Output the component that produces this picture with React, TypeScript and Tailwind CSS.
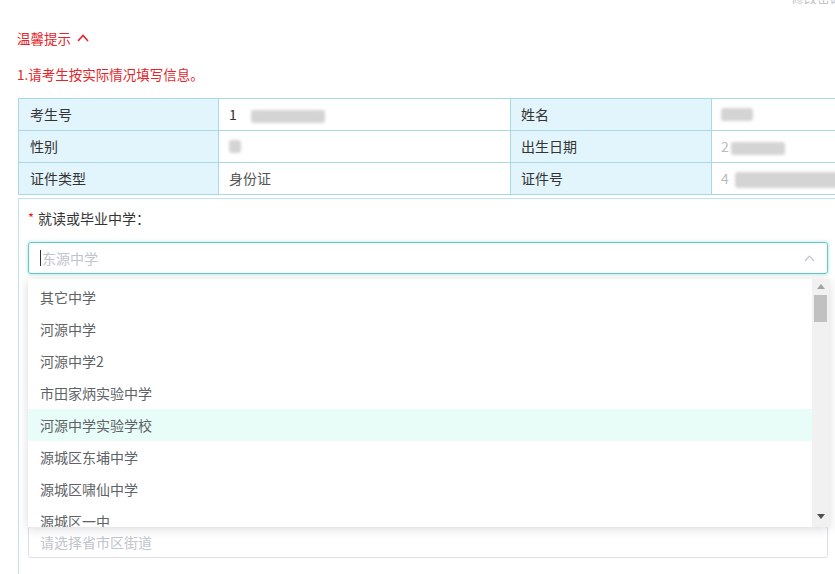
import React from "react";

const font = { fontFamily: '"Noto Sans CJK SC", "Noto Sans", sans-serif' };

function Blur({ w, h = 13 }: { w: number; h?: number }) {
  return (
    <span
      className="inline-block bg-[#d4d4d4] blur-[1.5px] rounded-[3px] align-middle"
      style={{ width: w, height: h }}
    />
  );
}

const items = [
  "其它中学",
  "河源中学",
  "河源中学2",
  "市田家炳实验中学",
  "河源中学实验学校",
  "源城区东埔中学",
  "源城区啸仙中学",
  "源城区一中",
];

export default function App() {
  return (
    <div
      className="w-[835px] h-[574px] overflow-hidden bg-white relative text-[14px]"
      style={font}
    >
      <div className="flex justify-end h-[4px] overflow-hidden items-end pr-[0px]">
        <span className="text-[#c4c4c4] text-[13px] leading-[13px] -mr-[8px]">修改密码</span>
      </div>
      <div className="pl-[17px] pt-[24px] text-[#e4262b] text-[13.5px] leading-[20px] flex items-center gap-[6px]">
        <span>温馨提示</span>
        <svg width="12" height="8" viewBox="0 0 12 8" fill="none" stroke="#e4262b" strokeWidth="1.6">
          <path d="M1 7 L6 1.5 L11 7" />
        </svg>
      </div>
      <div className="pl-[17px] mt-[16px] text-[#e4262b] text-[13.5px] leading-[20px]">
        1.请考生按实际情况填写信息。
      </div>
      <div className="ml-[18px] mt-[14px] w-[840px] border-t border-l border-[#a9d9e6] text-[#333] text-[14px]">
        {[
          ["考生号", <><span>1</span><span className="ml-[14px]"><Blur w={74} /></span></>, "姓名", <Blur w={32} />],
          ["性别", <Blur w={12} />, "出生日期", <><span className="text-[#bbb]">2</span><span className="ml-[2px]"><Blur w={54} /></span></>],
          ["证件类型", <span className="text-[#555]">身份证</span>, "证件号", <><span className="text-[#bbb]">4</span><span className="ml-[6px]"><Blur w={110} h={16} /></span></>],
        ].map((row, i) => (
          <div key={i} className="grid grid-cols-[200px_292px_201px_1fr] h-[32px]">
            <div className="bg-[#e3f5fc] border-r border-b border-[#a9d9e6] pl-[11px] flex items-center">{row[0]}</div>
            <div className="border-r border-b border-[#a9d9e6] pl-[10px] flex items-center">{row[1]}</div>
            <div className="bg-[#e3f5fc] border-r border-b border-[#a9d9e6] pl-[10px] flex items-center">{row[2]}</div>
            <div className="border-b border-[#a9d9e6] pl-[9px] flex items-center">{row[3]}</div>
          </div>
        ))}
      </div>
      <div className="ml-[18px] mt-[3px] w-[840px] h-[400px] border-t border-l border-[#bfe3ec] pl-[9px] pt-[9px] relative">
        <div className="flex items-center h-[20px] text-[#333] text-[14px]">
          <span className="text-[#e4262b] mr-[4px] text-[13px]">*</span>
          <span>就读或毕业中学：</span>
        </div>
        <div className="mt-[14px] w-[800px] h-[32px] border border-[#5ecbc6] rounded-[3px] shadow-[0_0_3px_1px_rgba(94,203,198,0.35)] flex items-center pl-[11px] pr-[12px]">
          <span className="w-[1px] h-[16px] bg-[#333] mr-[1px]" />
          <span className="text-[#c0c4cc] flex-1">东源中学</span>
          <svg width="11" height="7" viewBox="0 0 11 7" fill="none" stroke="#c0c4cc" strokeWidth="1.2">
            <path d="M1 6 L5.5 1.2 L10 6" />
          </svg>
        </div>
        <div className="h-[252px]" />
        <div className="w-[800px] h-[32px] border border-[#dcdfe6] rounded-[3px] flex items-center pl-[11px] text-[#c0c4cc]">
          请选择省市区街道
        </div>
        <div className="absolute left-[9px] top-[80px] w-[801px] h-[248px] bg-white shadow-[0_2px_10px_rgba(0,0,0,0.15)] flex overflow-hidden">
          <div className="flex-1 pt-[2px] text-[#606266] text-[14px]">
            {items.map((t, i) => (
              <div
                key={t}
                className={`h-[32px] flex items-center pl-[12px] ${i === 4 ? "bg-[#e8fcf8]" : ""}`}
              >
                {t}
              </div>
            ))}
          </div>
          <div className="w-[17px] h-full bg-[#f1f1f1] flex flex-col items-center">
            <div className="h-[15px] flex items-center justify-center">
              <svg width="8" height="5" viewBox="0 0 8 5"><path d="M0 5 L4 0 L8 5 Z" fill="#a3a3a3" /></svg>
            </div>
            <div className="w-[13px] h-[27px] bg-[#c1c1c1] mt-[1px]" />
            <div className="flex-1" />
            <div className="h-[15px] flex items-center justify-center mb-[3px]">
              <svg width="8" height="5" viewBox="0 0 8 5"><path d="M0 0 L8 0 L4 5 Z" fill="#505050" /></svg>
            </div>
          </div>
        </div>
      </div>
    </div>
  );
}
